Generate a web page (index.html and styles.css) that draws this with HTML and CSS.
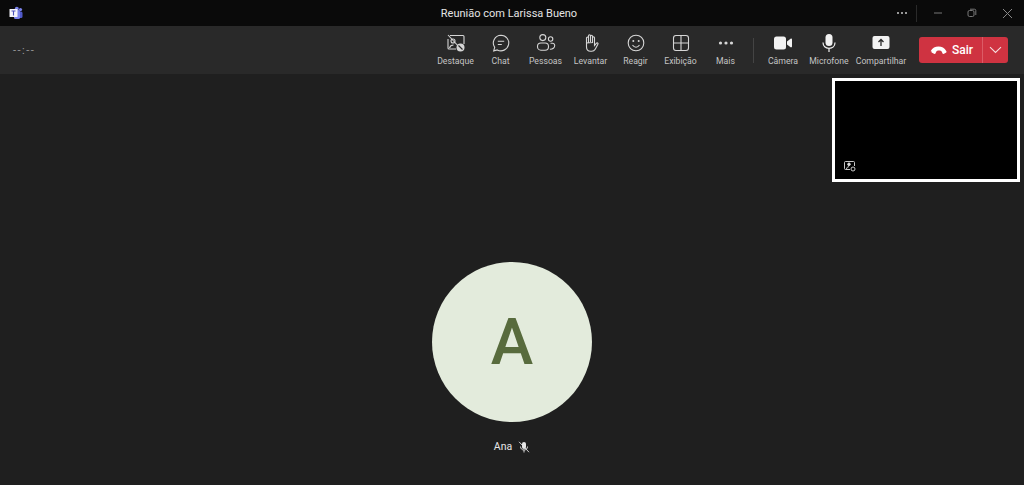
FILE: index.html
```html
<!DOCTYPE html>
<html lang="pt">
<head>
  <meta charset="UTF-8" />
  <title>Reunião com Larissa Bueno</title>
  <link rel="stylesheet" href="styles.css">
</head>
<body>
  <div class="titlebar">
    <svg class="logo" width="14" height="14" viewBox="0 0 14 14">
      <circle cx="11.5" cy="3.6" r="1.6" fill="#7b83eb"/>
      <rect x="6" y="5.5" width="7.5" height="6.5" rx="1.5" fill="#5059c9"/>
      <circle cx="7.8" cy="2.8" r="2" fill="#7b83eb"/>
      <rect x="5" y="4" width="6" height="9" rx="1.5" fill="#7b83eb"/>
      <rect x="0.5" y="3" width="8" height="8" rx="0.6" fill="#f4f4fb"/>
      <path d="M2.5 5h4M4.5 5v4.5" stroke="#4b53bc" stroke-width="1.1" fill="none"/>
    </svg>
    <div class="title">Reunião com Larissa Bueno</div>
    <div class="winbtns">
      <svg class="win-dots" width="12" height="4" viewBox="0 0 12 4" fill="#c8c8c8"><circle cx="2" cy="2" r="1"/><circle cx="6" cy="2" r="1"/><circle cx="10" cy="2" r="1"/></svg>
      <span class="win-sep"></span>
      <svg class="win-min" width="10" height="10" viewBox="0 0 10 10"><path d="M1 5h8" stroke="#777" fill="none"/></svg>
      <svg class="win-max" width="10" height="10" viewBox="0 0 10 10" fill="none" stroke="#777"><rect x="1" y="2.5" width="6" height="6" rx="1.5"/><path d="M3 1.2h4.500a1.300 1.300 0 0 1 1.300 1.300V7"/></svg>
      <svg class="win-close" width="11" height="11" viewBox="0 0 11 11"><path d="M1 1l9 9M10 1l-9 9" stroke="#888" fill="none"/></svg>
    </div>
  </div>

  <div class="toolbar">
    <div class="timer">--:--</div>
    <div class="actions">
      <div class="tool">
        <svg width="20" height="20" viewBox="0 0 20 20" fill="none" stroke="#d6d6d6" stroke-width="1.1">
          <path d="M4 2.500h13a1 1 0 0 1 1 1V11M2 6v9a1 1 0 0 0 1 1h7"/>
          <path d="M2 2l13 14"/>
          <circle cx="7" cy="8" r="2"/>
          <path d="M3.500 15c.5-2 2-3 4-3"/>
          <circle cx="14.500" cy="14.500" r="4" fill="#d6d6d6" stroke="none"/>
          <path d="M12.500 12.500l4 4" stroke="#292929"/>
        </svg>
        <span>Destaque</span>
      </div>
      <div class="tool">
        <svg width="20" height="20" viewBox="0 0 20 20" fill="none" stroke="#d6d6d6" stroke-width="1.1">
          <path d="M10 2.200a7.800 7.800 0 1 1-3.700 14.700l-3.600 1 1-3.500A7.800 7.800 0 0 1 10 2.200z"/>
          <path d="M6.800 8.300h6.400M6.800 11.500h4"/>
        </svg>
        <span>Chat</span>
      </div>
      <div class="tool">
        <svg width="20" height="20" viewBox="0 0 20 20" fill="none" stroke="#d6d6d6" stroke-width="1.1">
          <circle cx="6.800" cy="4.600" r="3"/>
          <circle cx="14.600" cy="6" r="2.200"/>
          <rect x="1.500" y="10" width="11" height="7.200" rx="3.400"/>
          <path d="M14.500 10.200h2a2.200 2.200 0 0 1 2.200 2.200c0 2.400-2 4-4.800 3.900"/>
        </svg>
        <span>Pessoas</span>
      </div>
      <div class="tool">
        <svg width="20" height="20" viewBox="0 0 20 20" fill="none" stroke="#d6d6d6" stroke-width="1.1">
          <path d="M5.500 10V5a1 1 0 0 1 2 0v4.500M7.500 9V2.800a1 1 0 0 1 2 0V9M9.500 9V3.200a1 1 0 0 1 2 0V9.500M11.500 9.500V4.800a1 1 0 0 1 2 0v7.700l1.800-2.200c.8-.8 2.200-.1 1.600 1l-2.700 4.900a4 4 0 0 1-3.500 2H9.500c-2.500 0-4-1.700-4-4.200V10z"/>
        </svg>
        <span>Levantar</span>
      </div>
      <div class="tool">
        <svg width="20" height="20" viewBox="0 0 20 20" fill="none" stroke="#d6d6d6" stroke-width="1.1">
          <circle cx="10" cy="10" r="7.800"/>
          <circle cx="7.300" cy="8" r="1" fill="#d6d6d6" stroke="none"/>
          <circle cx="12.700" cy="8" r="1" fill="#d6d6d6" stroke="none"/>
          <path d="M6.500 12c1 1.500 2.200 2.200 3.500 2.200s2.500-.7 3.500-2.200"/>
        </svg>
        <span>Reagir</span>
      </div>
      <div class="tool">
        <svg width="20" height="20" viewBox="0 0 20 20" fill="none" stroke="#d6d6d6" stroke-width="1.1">
          <rect x="2.500" y="2.500" width="15" height="15" rx="2.500"/>
          <path d="M10 2.500v15M2.500 10h15"/>
        </svg>
        <span>Exibição</span>
      </div>
      <div class="tool">
        <svg width="20" height="20" viewBox="0 0 20 20" fill="#d6d6d6">
          <circle cx="4.500" cy="10" r="1.600"/><circle cx="10" cy="10" r="1.600"/><circle cx="15.500" cy="10" r="1.600"/>
        </svg>
        <span>Mais</span>
      </div>
      <div class="divider"></div>
      <div class="tool cam">
        <svg width="20" height="20" viewBox="0 0 20 20" fill="#f2f2f2">
          <rect x="1" y="3.500" width="12" height="13" rx="2.500"/>
          <path d="M14 8.500l3.600-2.800c.5-.3 1.400 0 1.400.7v7.200c0 .7-.9 1-1.400.7L14 11.500z"/>
        </svg>
        <span>Câmera</span>
      </div>
      <div class="tool mic">
        <svg width="20" height="20" viewBox="0 0 20 20">
          <rect x="6.500" y="1" width="7" height="12" rx="3.500" fill="#f2f2f2"/>
          <path d="M4 9.500c0 3.500 2.500 5.800 6 5.800s6-2.300 6-5.800M10 15.300V19" stroke="#f2f2f2" stroke-width="1.200" fill="none"/>
        </svg>
        <span>Microfone</span>
      </div>
      <div class="tool share">
        <svg width="20" height="20" viewBox="0 0 20 20">
          <rect x="1.500" y="3" width="17" height="13" rx="2" fill="#f2f2f2"/>
          <path d="M10 13V6.500M7.500 9L10 6.500 12.500 9" stroke="#292929" stroke-width="1.300" fill="none"/>
        </svg>
        <span>Compartilhar</span>
      </div>
      <div class="leave">
        <div class="leave-main">
          <svg width="17" height="10" viewBox="0 0 17 10" fill="#fff">
            <path d="M.6 6.300C2.500 2.800 5.200 1.500 8.500 1.500s6 1.300 7.900 4.800c.3.600.1 1.200-.5 1.500l-1.900 1c-.6.300-1.100.1-1.400-.4l-1-2c-.2-.4-.5-.6-.9-.7-1.400-.3-2.300-.3-3.400 0-.4.100-.7.300-.9.700l-1 2c-.3.500-.8.700-1.400.4l-1.900-1c-.6-.3-.8-.9-.5-1.500z"/>
          </svg>
          <span>Sair</span>
        </div>
        <div class="leave-more">
          <svg width="13" height="8" viewBox="0 0 13 8"><path d="M1 1.200l5.500 5.300L12 1.200" stroke="#f6dcde" stroke-width="1.100" fill="none"/></svg>
        </div>
      </div>
    </div>
  </div>

  <div class="stage">
    <div class="avatar">A</div>
    <div class="name">
      <span>Ana</span>
      <svg width="12" height="12" viewBox="0 0 12 12" fill="none" stroke="#e6e6e6" stroke-width="0.900">
        <rect x="4" y="1" width="4" height="7" rx="2" fill="#e6e6e6" stroke="none"/>
        <path d="M2.500 5.500c0 2.200 1.500 3.500 3.500 3.500s3.500-1.300 3.500-3.500M6 9v2.500M1 .8l10 10.400"/>
      </svg>
    </div>
    <div class="preview">
      <svg width="12" height="12" viewBox="0 0 12 12" fill="none" stroke="#dcdcdc" stroke-width="0.900">
        <path d="M6 9.500H1.500a1 1 0 0 1-1-1v-6a1 1 0 0 1 1-1h8a1 1 0 0 1 1 1V6"/>
        <circle cx="5" cy="4.300" r="1.300" fill="#dcdcdc"/>
        <path d="M2.500 9c.2-1.500 1-2.300 2.500-2.300" />
        <circle cx="9" cy="9" r="2" />
      </svg>
    </div>
  </div>
</body>
</html>
```

FILE: styles.css
```css
* { box-sizing: border-box; }
html, body { height: 100%; }
body { margin: 0; height: 485px; overflow: hidden; display: flex; flex-direction: column; background: #1f1f1f; color: #d6d6d6; font-family: Roboto, "Open Sans", sans-serif; }

.titlebar { height: 26px; flex: none; display: flex; align-items: center; padding-left: 9px; background: #0a0a0a; }
.logo { flex: none; }
.title { flex: 1; text-align: center; padding-left: 100px; font-size: 11px; color: #e4e4e4; }
.winbtns { flex: none; width: 129px; height: 100%; display: flex; align-items: center; }
.win-dots { margin-left: 1px; }
.win-sep { width: 1px; height: 17px; margin-left: 8px; background: #2a2a2a; }
.win-min { margin-left: 16px; }
.win-max { margin-left: 24px; }
.win-close { margin-left: 25px; }

.toolbar { height: 48px; flex: none; display: flex; align-items: center; background: #292929; }
.timer { padding-left: 13px; font-size: 11px; letter-spacing: 1.500px; color: #9a9a9a; }
.actions { margin-left: auto; display: flex; align-items: center; padding-right: 16px; height: 100%; }

.tool { width: 45px; display: flex; flex-direction: column; align-items: center; gap: 2px; }
.tool span { font-size: 8.700px; line-height: 13px; color: #c4c4c4; white-space: nowrap; }
.tool svg { display: block; }
.divider { width: 1px; height: 25px; margin: 0 6px 0 5px; background: #444; }
.cam { width: 46px; }
.mic { width: 46px; }
.share { width: 58px; margin-right: 9px; }

.leave { width: 89px; height: 26px; display: flex; border-radius: 3px; background: #cf3341; color: #fff; }
.leave-main { flex: 1; display: flex; align-items: center; justify-content: center; gap: 5px; padding-left: 2px; font-size: 12px; font-weight: 500; }
.leave-more { width: 26px; display: flex; align-items: center; justify-content: center; border-left: 1px solid #dc5b66; }

.stage { flex: 1; position: relative; display: flex; flex-direction: column; align-items: center; padding-top: 188px; }
.avatar { width: 160px; height: 160px; border-radius: 50%; display: flex; align-items: center; justify-content: center; background: #e3ebdc; color: #586b3d; font-size: 64px; font-weight: 500; }
.name { margin-top: 18px; display: flex; align-items: center; gap: 6px; font-size: 10.500px; color: #e6e6e6; }
.preview { position: absolute; top: 4px; left: 832px; width: 188px; height: 104px; border: 3px solid #fff; background: #000; display: flex; align-items: flex-end; padding: 0 0 7px 9px; }
```
